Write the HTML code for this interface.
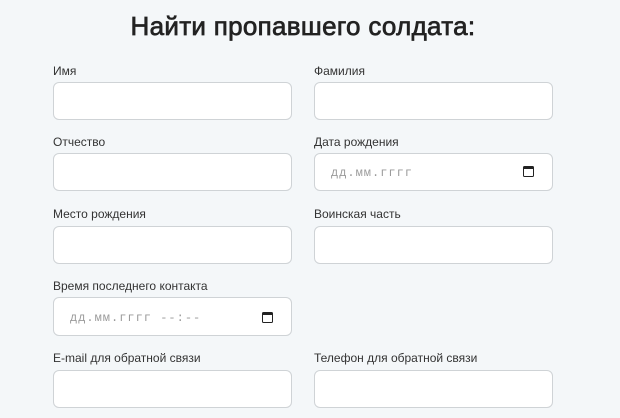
<!DOCTYPE html>
<html><head><meta charset="utf-8"><style>
body{margin:0;width:620px;height:418px;background:#f4f7f9;font-family:"Liberation Sans","DejaVu Sans",sans-serif;overflow:hidden;position:relative}
h1{position:absolute;top:11px;left:0;width:606px;text-align:center;margin:0;font-size:26px;font-weight:normal;color:#222;letter-spacing:0.3px;-webkit-text-stroke:0.7px #222}
.l{position:absolute;font-size:12px;color:#333}
.i{position:absolute;width:239px;height:38px;background:#fff;border:1px solid #cfd3d6;border-radius:6px;box-sizing:border-box}
.ph{position:absolute;left:16px;top:12px;font-family:"Liberation Mono",monospace;font-size:12px;color:#9a9a9a;letter-spacing:1px}
.cal{position:absolute;right:18px;top:12px;width:11px;height:11px;border:1.5px solid #222;border-top-width:3px;border-radius:1.5px;box-sizing:border-box}
</style></head><body>
<h1>Найти пропавшего солдата:</h1>
<div class="l" style="left:53px;top:64px">Имя</div>
<div class="l" style="left:314px;top:64px">Фамилия</div>
<div class="i" style="left:53px;top:82px"></div>
<div class="i" style="left:314px;top:82px"></div>
<div class="l" style="left:53px;top:135px">Отчество</div>
<div class="l" style="left:314px;top:135px">Дата рождения</div>
<div class="i" style="left:53px;top:153px"></div>
<div class="i" style="left:314px;top:153px"><span class="ph">дд.мм.гггг</span><span class="cal"></span></div>
<div class="l" style="left:53px;top:207px">Место рождения</div>
<div class="l" style="left:314px;top:207px">Воинская часть</div>
<div class="i" style="left:53px;top:226px"></div>
<div class="i" style="left:314px;top:226px"></div>
<div class="l" style="left:53px;top:279px">Время последнего контакта</div>
<div class="i" style="left:53px;top:297px;height:39px"><span class="ph" style="top:13px">дд.мм.гггг --:--</span><span class="cal" style="top:14px"></span></div>
<div class="l" style="left:53px;top:351px">E-mail для обратной связи</div>
<div class="l" style="left:314px;top:351px">Телефон для обратной связи</div>
<div class="i" style="left:53px;top:370px"></div>
<div class="i" style="left:314px;top:370px"></div>
</body></html>
